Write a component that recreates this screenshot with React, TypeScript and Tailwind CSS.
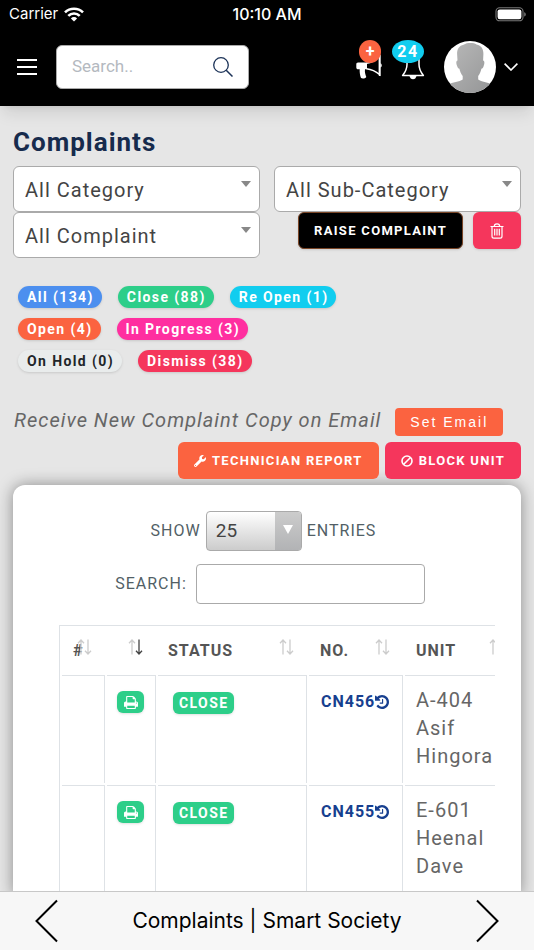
import React from 'react';

interface StatusBadge {
  label: string;
  count: number;
  className: string;
}

interface Complaint {
  no: string;
  status: string;
  unit: string[];
}

const badgeRows: StatusBadge[][] = [
  [
    { label: 'All', count: 134, className: 'bg-[#4c8fef] text-white' },
    { label: 'Close', count: 88, className: 'bg-[#2dce89] text-white' },
    { label: 'Re Open', count: 1, className: 'bg-[#11cdef] text-white' },
  ],
  [
    { label: 'Open', count: 4, className: 'bg-[#fb6340] text-white' },
    { label: 'In Progress', count: 3, className: 'bg-[#ff2fa0] text-white' },
  ],
  [
    { label: 'On Hold', count: 0, className: 'bg-[#e9ecec] text-[#212529]' },
    { label: 'Dismiss', count: 38, className: 'bg-[#f5365c] text-white' },
  ],
];

const complaints: Complaint[] = [
  { no: 'CN456', status: 'Close', unit: ['A-404', 'Asif', 'Hingora'] },
  { no: 'CN455', status: 'Close', unit: ['E-601', 'Heenal', 'Dave'] },
];

const WifiIcon = () => (
  <svg viewBox="0 0 20 15" className="w-5 h-[15px]" fill="none" stroke="#fff" strokeWidth="2.6">
    <path d="M1 5.4a12.8 12.8 0 0 1 18 0" />
    <path d="M4.3 8.9a8.1 8.1 0 0 1 11.4 0" />
    <path d="M10 14.5 6.9 11.4a4.4 4.4 0 0 1 6.2 0z" fill="#fff" stroke="none" />
  </svg>
);

const BatteryIcon = () => (
  <svg viewBox="0 0 31 15" className="w-[31px] h-[15px]">
    <rect x="1" y="0.8" width="27" height="13" rx="3.6" fill="none" stroke="#777" strokeWidth="1.1" />
    <rect x="2.6" y="2.4" width="23.8" height="9.8" rx="2.2" fill="#fff" />
    <path d="M29.2 5.2v4.4c1-.4 1.6-1.2 1.6-2.2s-.6-1.8-1.6-2.2z" fill="#777" />
  </svg>
);

const SearchIcon = () => (
  <svg viewBox="0 0 20 20" className="w-5 h-5" fill="none" stroke="#1c3358" strokeWidth="1.3">
    <circle cx="8" cy="8" r="7.3" />
    <path d="M13.2 13.2 19.5 19.5" strokeWidth="1.5" />
  </svg>
);

const MegaphoneIcon = () => (
  <svg viewBox="0 0 26 26" className="w-[26px] h-[26px]">
    <path d="M2 8.500h9v6.800H9c-.4 2.500.2 5 1.300 7.600-1.200 1.800-3.800 2-5.300 1.200-1-2.700-1.500-5.600-1.300-8.800H2C1 15.300.3 14.500.3 13.500v-3.200C.3 9.200 1 8.500 2 8.500z" fill="#fff" />
    <path d="M10.500 9.300C15.500 8.700 19.500 6.300 23.500 2v18.500c-3.800-3.300-8-5.200-13-5.800" fill="none" stroke="#fff" strokeWidth="1.5" />
    <path d="M23.700 1v21" stroke="#fff" strokeWidth="1.8" />
    <path d="M24.300 9.300c1.900.4 1.900 3.800 0 4.200z" fill="#fff" />
  </svg>
);

const BellIcon = () => (
  <svg viewBox="0 0 26 26" className="w-[26px] h-[26px]">
    <path d="M7 2v8.500c0 4.500-1.600 7.500-4.400 11h20.800c-2.800-3.500-4.400-6.500-4.400-11V2" fill="none" stroke="#fff" strokeWidth="1.5" strokeLinejoin="round" />
    <path d="M9.500 22h7c-.5 2-1.700 3.300-3.500 3.300S10 24 9.500 22z" fill="#fff" />
  </svg>
);

const Avatar = () => (
  <svg viewBox="0 0 52 52" className="w-[52px] h-[52px] rounded-full">
    <defs>
      <linearGradient id="skin" x1="0" y1="0" x2="1" y2="1">
        <stop offset="0" stopColor="#b9b9b9" />
        <stop offset="1" stopColor="#949596" />
      </linearGradient>
    </defs>
    <rect width="52" height="52" fill="#fff" />
    <path
      d="M26.500 2c2.500 0 4.500.4 6 1.600 5 .8 7 4.900 6.900 9.400l-.3 6.500c1.900.6 1.400 3.500.5 5.700-.5 1.300-1.100 2.400-2.200 2.500-.6 3-1.700 5.200-3.200 7.200v3.600c3.200 2.500 9.300 2.400 13.800 5V52H4v-8.500c4.500-2.600 11.500-2.500 14.700-5v-3.600c-1.500-2-2.700-4.200-3.300-7.200-1.100-.1-1.700-1.200-2.200-2.500-.9-2.200-1.500-5.100.3-5.700l-.4-6.500C12.900 8 15.500 4.500 19.500 3.800 21.500 2.400 24 2 26.500 2z"
      fill="url(#skin)"
    />
  </svg>
);

const TrashIcon = () => (
  <svg viewBox="0 0 14 16" className="w-[14px] h-4" fill="none" stroke="#fff" strokeWidth="1.2">
    <path d="M.5 3.500h13M4.300 3.300C4.300 1.600 5 .8 7 .8s2.700.8 2.700 2.500M2 3.500v9.700c0 1.300.6 1.900 1.900 1.900h6.200c1.300 0 1.900-.6 1.900-1.900V3.500M4.700 5.800v6.800M7 5.800v6.800M9.300 5.800v6.800" />
  </svg>
);

const WrenchIcon = () => (
  <svg viewBox="0 0 512 512" className="w-3 h-3" fill="currentColor">
    <path d="M507.700 109.100c-2.200-9-13.500-12.100-20.100-5.500l-74.400 74.400-67.900-11.300L334 98.900l74.400-74.400c6.600-6.600 3.400-17.900-5.700-20.200-47.400-11.700-99.600.9-136.600 37.900-39.600 39.600-50.500 97.100-34.100 147.200L18.700 402.800c-25 25-25 65.500 0 90.500s65.500 25 90.500 0l213.200-213.200c50.100 16.700 107.500 5.700 147.400-34.200 37.100-37.100 49.700-89.300 37.900-136.800zM64 472a24 24 0 1 1 0-48 24 24 0 0 1 0 48z" />
  </svg>
);

const BanIcon = () => (
  <svg viewBox="0 0 12 12" className="w-3 h-3" fill="none" stroke="currentColor" strokeWidth="1.6">
    <circle cx="6" cy="6" r="5" />
    <path d="M2.500 9.500 9.500 2.500" />
  </svg>
);

const PrintIcon = () => (
  <svg viewBox="0 128 1664 1536" className="w-[14px] h-[13px]" fill="currentColor">
    <path d="M384 1536h896v-256h-896v256zM384 896h896v-384h-160q-40 0-68-28t-28-68v-160h-640v640zM1536 960q0-26-19-45t-45-19-45 19-19 45 19 45 45 19 45-19 19-45zM1664 960v416q0 13-9.500 22.500t-22.500 9.500h-224v160q0 40-28 68t-68 28h-960q-40 0-68-28t-28-68v-160h-224q-13 0-22.500-9.500t-9.500-22.500v-416q0-79 56.500-135.500t135.500-56.500h64v-544q0-40 28-68t68-28h672q40 0 88 20t76 48l152 152q28 28 48 76t20 88v256h64q79 0 135.500 56.500t56.500 135.500z" />
  </svg>
);

const HistoryIcon = () => (
  <svg viewBox="128 128 1536 1536" className="w-[14px] h-[14px] shrink-0" fill="currentColor">
    <path d="M1664 896q0 156-61 298t-164 245-245 164-298 61q-172 0-327-72.500t-264-204.500q-7-10-6.500-22.500t8.500-20.500l137-138q10-9 25-9 16 2 23 12 73 95 179 147t225 52q104 0 198.500-40.500t163.500-109.500 109.500-163.500 40.500-198.500-40.500-198.500-109.500-163.500-163.500-109.500-198.500-40.500q-98 0-188 35.500t-160 101.500l137 138q31 30 14 69-17 40-59 40h-448q-26 0-45-19t-19-45v-448q0-42 40-59 39-17 69 14l130 129q107-101 244.500-156.500t284.500-55.500q156 0 298 61t245 164 164 245 61 298zM1024 608v448q0 14-9 23t-23 9h-320q-14 0-23-9t-9-23v-64q0-14 9-23t23-9h224v-352q0-14 9-23t23-9h64q14 0 23 9t9 23z" />
  </svg>
);

const SortIcon: React.FC<{ active?: boolean }> = ({ active }) => (
  <svg viewBox="0 0 15 16" className="absolute right-[13px] top-[11px] w-[15px] h-4" fill="none" strokeWidth="1.3">
    <path d="M4 15.500V1M1 4.200 4 1l3 3.200" stroke="#ccc" />
    <path d="M11 .5V15M8 11.800 11 15l3-3.200" stroke={active ? '#444' : '#ccc'} />
  </svg>
);

const FilterSelect: React.FC<{ label: string }> = ({ label }) => (
  <div className="relative">
    <select
      aria-label={label}
      className="block w-full h-[46px] pt-px pl-[11px] pr-8 appearance-none bg-white border border-[#aaa] rounded-md text-xl tracking-[1px] text-[#444]"
    >
      <option>{label}</option>
    </select>
    <svg viewBox="0 0 10 6" className="absolute right-[9px] top-[15px] w-[10px] h-[6px] pointer-events-none">
      <path d="M0 0h10L5 6z" fill="#888" />
    </svg>
  </div>
);

const App: React.FC = () => {
  return (
    <div className="h-screen flex flex-col bg-[#e6e6e6] font-['Roboto',sans-serif] overflow-hidden">
      <div className="grid grid-cols-3 items-center h-7 shrink-0 px-2 bg-black text-white font-['Inter',sans-serif]">
        <div className="flex items-center gap-[6px] pl-px text-[15px]">
          <span>Carrier</span>
          <WifiIcon />
        </div>
        <span className="text-center text-base font-medium">10:10 AM</span>
        <div className="flex justify-end">
          <BatteryIcon />
        </div>
      </div>

      <header className="flex items-center justify-between h-[78px] shrink-0 pl-[17px] pr-4 bg-black shadow-lg">
        <div className="flex items-center gap-[19px]">
          <button type="button" aria-label="Menu" className="flex flex-col gap-[5px] w-5">
            <span className="h-[2px] bg-white"></span>
            <span className="h-[2px] bg-white"></span>
            <span className="h-[2px] bg-white"></span>
          </button>
          <div className="flex items-center w-[193px] h-11 px-[15px] bg-white border border-[#aaa] rounded-md">
            <input
              type="text"
              aria-label="Search"
              placeholder="Search.."
              className="flex-1 min-w-0 text-[17px] text-gray-700 placeholder:text-[#b4b9c0] outline-none"
            />
            <button type="button" aria-label="Submit search">
              <SearchIcon />
            </button>
          </div>
        </div>
        <div className="flex items-center">
          <button type="button" aria-label="New announcement" className="relative mr-[18px]">
            <MegaphoneIcon />
            <span className="absolute left-[3px] -top-[14px] flex items-center justify-center w-[22px] h-[23px] rounded-full bg-[#fb6340] text-white text-base font-bold">
              +
            </span>
          </button>
          <button type="button" aria-label="Notifications" className="relative mr-[18px]">
            <BellIcon />
            <span className="absolute -left-2 -top-[14px] flex items-center justify-center w-8 h-[23px] rounded-[50%] bg-[#11cdef] text-white text-base font-bold tracking-widest">
              24
            </span>
          </button>
          <button type="button" aria-label="Account" className="flex items-center gap-2">
            <Avatar />
            <svg viewBox="0 0 14 8" className="w-[14px] h-2" fill="none" stroke="#fff" strokeWidth="1.6">
              <path d="M.6.6 7 7 13.400.6" />
            </svg>
          </button>
        </div>
      </header>

      <main className="flex-1 min-h-0 overflow-y-auto [scrollbar-width:none] px-[13px] pt-5">
        <h1 className="text-[26px] leading-8 mb-2 font-bold tracking-[1px] text-[#172b4d]">Complaints</h1>

        <div className="grid grid-cols-2 gap-x-[14px]">
          <FilterSelect label="All Category" />
          <FilterSelect label="All Sub-Category" />
          <FilterSelect label="All Complaint" />
          <div className="flex justify-end items-start gap-[10px]">
            <button
              type="button"
              className="h-[37px] px-[15px] bg-black border border-[#7a4526] rounded-md shadow text-[13px] font-bold tracking-widest text-white"
            >
              RAISE COMPLAINT
            </button>
            <button
              type="button"
              aria-label="Delete"
              className="flex items-center justify-center w-12 h-[37px] bg-[#f5365c] rounded-md shadow"
            >
              <TrashIcon />
            </button>
          </div>
        </div>

        <div className="flex flex-col gap-[10px] mt-7 pl-[5px]">
          {badgeRows.map((row, i) => (
            <div key={i} className="flex gap-4">
              {row.map((badge) => (
                <a
                  key={badge.label}
                  href="#"
                  className={`h-[22px] pl-[9px] pr-2 rounded-full shadow text-sm leading-[22px] font-bold tracking-widest ${badge.className}`}
                >
                  {badge.label} ({badge.count})
                </a>
              ))}
            </div>
          ))}
        </div>

        <div className="flex items-center gap-[14px] mt-8 pl-px">
          <i className="text-xl leading-7 tracking-[1px] text-[#666] whitespace-nowrap">Receive New Complaint Copy on Email</i>
          <button
            type="button"
            className="h-7 px-[15px] mt-1 bg-[#fb6340] rounded font-['Liberation_Sans',sans-serif] text-sm tracking-[2px] text-white whitespace-nowrap"
          >
            Set Email
          </button>
        </div>

        <div className="flex justify-end gap-[6px] mt-[6px]">
          <button
            type="button"
            className="flex items-center gap-[6px] h-[37px] px-4 bg-[#fb6340] rounded-md text-[13px] font-bold tracking-widest text-white"
          >
            <WrenchIcon />
            TECHNICIAN REPORT
          </button>
          <button
            type="button"
            className="flex items-center gap-[6px] h-[37px] px-4 bg-[#f5365c] rounded-md text-[13px] font-bold tracking-widest text-white"
          >
            <BanIcon />
            BLOCK UNIT
          </button>
        </div>

        <section className="mt-[6px] pl-[46px] pr-[26px] pt-[26px] bg-white rounded-t-xl shadow-[0_0_16px_rgba(0,0,0,0.4)]">
          <div className="flex flex-col items-center gap-[13px] -ml-[14px] text-base tracking-[1px] text-[#525f66]">
            <label className="flex items-center gap-[5px] mr-[13px]">
              SHOW
              <span className="relative">
                <select className="block w-24 h-10 pl-[9px] appearance-none border border-[#aaa] rounded bg-linear-to-b from-white to-[#ccc] text-[19px] tracking-normal text-[#444]">
                  <option>25</option>
                </select>
                <span className="absolute right-px top-px flex items-center justify-center w-[26px] h-[38px] pb-1 rounded-r-[3px] bg-linear-to-b from-[#ccc] to-[#b2b3b5] pointer-events-none">
                  <svg viewBox="0 0 10 9" className="w-[10px] h-[9px]">
                    <path d="M0 0h10L5 9z" fill="#fff" />
                  </svg>
                </span>
              </span>
              ENTRIES
            </label>
            <label className="flex items-center gap-[9px]">
              SEARCH:
              <input type="search" className="w-[229px] h-10 px-3 border border-[#aaa] rounded bg-white outline-none" />
            </label>
          </div>

          <div className="mt-[21px] overflow-x-auto [scrollbar-width:none]">
            <table className="w-[460px] table-fixed border-separate border-spacing-[2px] border-t border-l border-[#dee2e6]">
              <colgroup>
                <col className="w-[43px]" />
                <col className="w-[49px]" />
                <col className="w-[149px]" />
                <col className="w-[94px]" />
                <col />
              </colgroup>
              <thead>
                <tr className="h-[45px] text-left text-base font-bold tracking-[1px] text-[#555]">
                  <th className="relative pl-[11px]">
                    #<SortIcon />
                  </th>
                  <th className="relative">
                    <SortIcon active />
                  </th>
                  <th className="relative pl-[10px]">
                    STATUS
                    <SortIcon />
                  </th>
                  <th className="relative pl-[11px]">
                    NO.
                    <SortIcon />
                  </th>
                  <th className="relative pl-[11px]">
                    UNIT
                    <SortIcon />
                  </th>
                </tr>
              </thead>
              <tbody>
                {complaints.map((item) => (
                  <tr key={item.no} className="h-[108px] align-top text-[#666]">
                    <td className="border-t border-r border-[#dee2e6]"></td>
                    <td className="border-t border-r border-[#dee2e6] pl-[10px] pt-[15px]">
                      <button
                        type="button"
                        aria-label="Print"
                        className="flex items-center justify-center w-[27px] h-[22px] rounded-md bg-[#2dce89] shadow text-white"
                      >
                        <PrintIcon />
                      </button>
                    </td>
                    <td className="border-t border-r border-[#dee2e6] pl-[15px] pt-4">
                      <span className="block w-fit h-[22px] px-[6px] rounded-md bg-[#2dce89] shadow text-sm leading-[22px] font-bold tracking-widest text-white uppercase">
                        {item.status}
                      </span>
                    </td>
                    <td className="border-t border-r border-[#dee2e6] pl-3 pt-[15px]">
                      <a href="#" className="flex items-center text-base leading-[22px] font-bold tracking-[1px] text-[#173f8f]">
                        {item.no}
                        <HistoryIcon />
                      </a>
                    </td>
                    <td className="border-t border-r border-[#dee2e6] pl-[11px] pt-[10px] text-xl leading-7 tracking-[1px]">
                      {item.unit.map((line) => (
                        <div key={line}>{line}</div>
                      ))}
                    </td>
                  </tr>
                ))}
              </tbody>
            </table>
          </div>
        </section>
      </main>

      <footer className="flex items-center justify-between h-[59px] shrink-0 px-[35px] bg-[#f7f7f7] border-t border-[#c8c8c8] font-['Inter',sans-serif]">
        <button type="button" aria-label="Back">
          <svg viewBox="0 0 24 44" className="w-6 h-11" fill="none" stroke="#000" strokeWidth="2">
            <path d="M22 1.500 1.500 22 22 42.500" />
          </svg>
        </button>
        <span className="text-[21px] text-black">Complaints | Smart Society</span>
        <button type="button" aria-label="Forward">
          <svg viewBox="0 0 24 44" className="w-6 h-11" fill="none" stroke="#000" strokeWidth="2">
            <path d="M2 1.500 22.500 22 2 42.500" />
          </svg>
        </button>
      </footer>
    </div>
  );
};

export default App;
